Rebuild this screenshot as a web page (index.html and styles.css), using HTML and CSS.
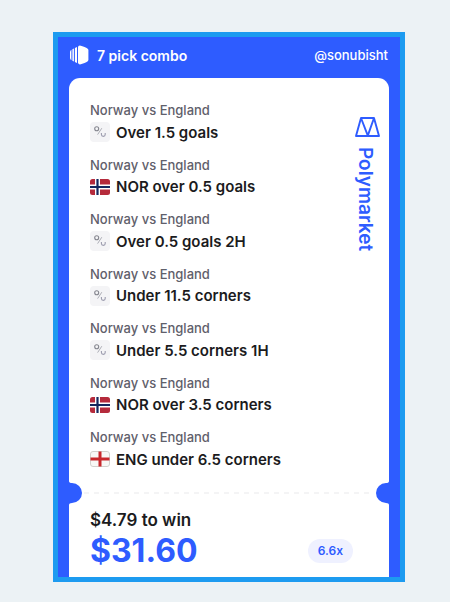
FILE: index.html
```html
<!DOCTYPE html>
<html lang="en">
<head>
<meta charset="utf-8">
<meta name="viewport" content="width=device-width, initial-scale=1">
<title>7 pick combo</title>
<link rel="stylesheet" href="styles.css">
</head>
<body>
<svg class="defs" aria-hidden="true">
  <symbol id="percent" viewBox="0 0 20 20">
    <rect width="20" height="20" rx="4" fill="#f4f4f6"/>
    <g fill="none" stroke="#85868f" stroke-width="1.1">
      <circle cx="6.7" cy="6.8" r="2"/>
      <path d="M11.8 6.2 7.6 12.6" stroke="#a5a6ae" stroke-width=".9"/>
      <path d="M11.4 11v1.5a1.9 1.9 0 0 0 3.8 0V11" stroke="#9c9cae"/>
    </g>
  </symbol>
  <symbol id="norway" viewBox="0 0 20 16">
    <rect width="20" height="16" rx="2.5" fill="#b52b3c"/>
    <path d="M5 0h5v16H5zM0 5.5h20v5H0z" fill="#fff"/>
    <path d="M6.4 0h2.2v16H6.4zM0 6.9h20v2.2H0z" fill="#14285f"/>
  </symbol>
  <symbol id="england" viewBox="0 0 20 16">
    <rect x=".5" y=".5" width="19" height="15" rx="2.5" fill="#f8f8f6" stroke="#d2d1cd"/>
    <path d="M8.5 .5h3v15h-3zM.5 6.5h19v3H.5z" fill="#c8282d"/>
  </symbol>
  <symbol id="notch" viewBox="0 0 13 24">
    <path d="M0 0Q0 2 3 2A10 10 0 0 1 3 22Q0 22 0 24Z" fill="#2e5cff"/>
  </symbol>
</svg>
<main class="ticket">
  <header class="top">
    <svg class="combo" viewBox="0 0 20 20" aria-hidden="true">
      <path fill="#fff" d="M9 2.4Q9 .6 10.8 .6L12.6 1Q19.4 3.2 19.4 5V15Q19.4 16.8 12.6 19L10.8 19.4Q9 19.4 9 17.6Z"/>
      <path fill="#fff" d="M8 2V18L5.9 17V3ZM4.9 3.5V16.5L3.4 15.7V4.3ZM2.4 4.8V15.2Q1 14.4 1 13V7Q1 5.6 2.4 4.8Z"/>
    </svg>
    <h1 class="title">7 pick combo</h1>
    <span class="handle">@sonubisht</span>
  </header>
  <section class="card">
    <div class="upper">
      <ul class="picks">
        <li><p class="match">Norway vs England</p><p class="pick"><svg class="icon"><use href="#percent"/></svg>Over 1.5 goals</p></li>
        <li><p class="match">Norway vs England</p><p class="pick"><svg class="icon flag"><use href="#norway"/></svg>NOR over 0.5 goals</p></li>
        <li><p class="match">Norway vs England</p><p class="pick"><svg class="icon"><use href="#percent"/></svg>Over 0.5 goals 2H</p></li>
        <li><p class="match">Norway vs England</p><p class="pick"><svg class="icon"><use href="#percent"/></svg>Under 11.5 corners</p></li>
        <li><p class="match">Norway vs England</p><p class="pick"><svg class="icon"><use href="#percent"/></svg>Under 5.5 corners 1H</p></li>
        <li><p class="match">Norway vs England</p><p class="pick"><svg class="icon flag"><use href="#norway"/></svg>NOR over 3.5 corners</p></li>
        <li><p class="match">Norway vs England</p><p class="pick"><svg class="icon flag"><use href="#england"/></svg>ENG under 6.5 corners</p></li>
      </ul>
      <div class="brand">
        <svg class="logo" viewBox="0 0 25 20" aria-hidden="true">
          <path d="M6 1H19L24 19H1ZM6 1 12.8 18.6M19 1 12.8 18.6" fill="none" stroke="#2e5cff" stroke-width="1.9" stroke-linejoin="round"/>
        </svg>
        <span class="brand-name">Polymarket</span>
      </div>
    </div>
    <div class="tear">
      <svg class="notch"><use href="#notch"/></svg>
      <svg class="dashes" aria-hidden="true"><line x1="0" y1="1" x2="100%" y2="1" stroke="#f4f4f5" stroke-width="2" stroke-dasharray="5 5"/></svg>
      <svg class="notch right"><use href="#notch"/></svg>
    </div>
    <div class="payout">
      <div>
        <p class="stake">$4.79 to win</p>
        <p class="amount">$31.60</p>
      </div>
      <span class="odds">6.6x</span>
    </div>
  </section>
</main>
</body>
</html>
```
FILE: styles.css
```css
* {
  box-sizing: border-box;
  margin: 0;
  padding: 0;
}

body {
  display: flex;
  min-height: 100vh;
  padding: 32px 45px 20px 53px;
  background: #ecf2f5;
  color: #1b1b20;
  font-family: Inter, "Liberation Sans", sans-serif;
}

.defs {
  position: absolute;
  width: 0;
  height: 0;
}

.ticket {
  display: flex;
  flex: 1;
  flex-direction: column;
  padding: 0 11px;
  border: 5px solid #1d9bf0;
  background: #2e5cff;
}

.top {
  display: flex;
  align-items: center;
  height: 41px;
  padding-bottom: 5px;
  color: #fff;
}

.combo {
  width: 20px;
  height: 20px;
  margin-right: 8px;
}

.title {
  flex: 1;
  font-size: 14px;
  font-weight: 600;
}

.handle {
  padding-right: 1px;
  font-size: 13px;
  font-weight: 500;
}

.card {
  display: flex;
  flex: 1;
  flex-direction: column;
  border-radius: 11px 11px 0 0;
  background: #fff;
}

.upper {
  display: flex;
  flex: 1;
  justify-content: space-between;
  padding: 23px 9px 9px 21px;
}

.picks {
  display: flex;
  flex-direction: column;
  justify-content: space-between;
  list-style: none;
}

.match {
  color: #5f606b;
  font-size: 13px;
  font-weight: 500;
  line-height: 18px;
}

.pick {
  display: flex;
  align-items: center;
  gap: 6px;
  height: 26px;
  font-size: 15px;
  font-weight: 600;
}

.icon {
  width: 20px;
  height: 20px;
}

.flag {
  height: 16px;
}

.brand {
  display: flex;
  flex-direction: column;
  align-items: flex-start;
  gap: 10px;
  padding-top: 16px;
  color: #2e5cff;
}

.logo {
  width: 25px;
  height: 20px;
}

.brand-name {
  font-size: 19px;
  font-weight: 600;
  line-height: 20px;
  writing-mode: vertical-rl;
}

.tear {
  display: flex;
  align-items: center;
  gap: 2px;
}

.notch {
  width: 13px;
  height: 24px;
}

.right {
  transform: scaleX(-1);
}

.dashes {
  flex: 1;
  width: 0;
  height: 2px;
}

.payout {
  display: flex;
  align-items: flex-end;
  justify-content: space-between;
  padding: 4px 36px 7px 21px;
}

.stake {
  font-size: 17px;
  font-weight: 600;
  line-height: 22px;
}

.amount {
  color: #2e5cff;
  font-size: 32px;
  font-weight: 700;
  line-height: 39px;
}

.odds {
  margin-bottom: 7px;
  padding: 0 10px;
  border-radius: 12px;
  background: #eff1ff;
  color: #2e5cff;
  font-size: 12px;
  font-weight: 600;
  line-height: 24px;
}
```
